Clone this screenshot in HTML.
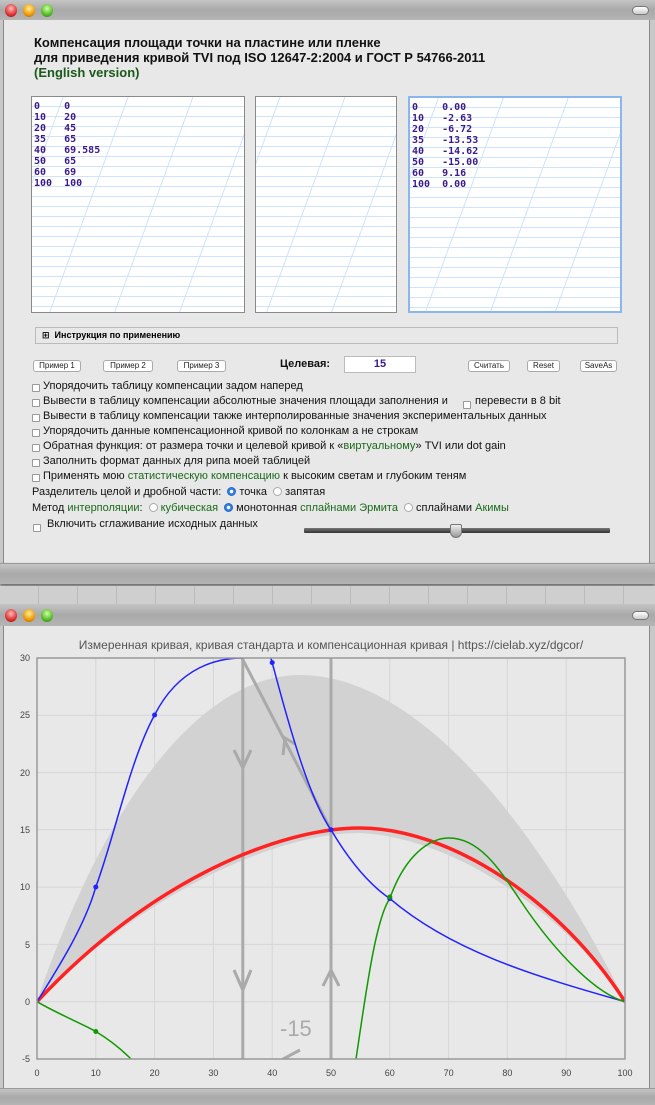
<!DOCTYPE html>
<html><head><meta charset="utf-8"><style>
*{margin:0;padding:0;box-sizing:border-box}
body{width:655px;height:1105px;overflow:hidden;background:#c8c8c8;font-family:"Liberation Sans","DejaVu Sans",sans-serif;position:relative}
.bar{position:absolute;left:0;width:655px;background:linear-gradient(#c4c4c4,#a9a9a9 50%,#b4b4b4);}
.tl{position:absolute;width:12px;height:13px;border-radius:50%;top:4px}
.r{background:radial-gradient(circle at 50% 35%,#fbb,#d33 60%,#900)}
.o{background:radial-gradient(circle at 50% 35%,#fe9,#e90 60%,#a50)}
.g{background:radial-gradient(circle at 50% 35%,#cfa,#5b2 60%,#272)}
.pill{position:absolute;right:6px;top:6px;width:17px;height:9px;border-radius:5px;border:1px solid #777;background:linear-gradient(#fff,#ccc)}
.content{position:absolute;left:3px;width:647px;background:#e8e8e8;border-left:1px solid #888;border-right:1px solid #888}
.abs{position:absolute}
.ta{position:absolute;top:96px;height:217px;border:1px solid #8a8a8a;background-color:#fff;
background-image:repeating-linear-gradient(180deg,transparent 0 9px,#cfe3fb 9px 10px),repeating-linear-gradient(-70deg,transparent 0 60px,#cfe3fb 60px 61px);
font:bold 10px "DejaVu Sans Mono","Liberation Mono",monospace;color:#3a1a8a;line-height:11px;padding:4px 2px;white-space:pre}
.btn{position:absolute;top:360px;height:12px;border:1px solid #aaa;border-radius:3px;background:#fff;font-size:8px;line-height:10px;text-align:center;color:#222}
.cb{position:absolute;left:32px;width:8px;height:8px;border:1px solid #999;background:#fff;border-radius:1px}
.t{position:absolute;font-size:11px;color:#111;white-space:nowrap}
.gr{color:#1a6a1a}
.rad{display:inline-block;width:9px;height:9px;border-radius:50%;border:1px solid #aaa;background:#fff;vertical-align:-1px;margin:0 3px}
.rad.on{background:radial-gradient(circle,#fff 0 1.5px,#2d7ee8 2px);border-color:#2a6ac8}
</style></head><body>
<div class="bar" style="top:0;height:20px"><div class="tl r" style="left:5px"></div><div class="tl o" style="left:23px"></div><div class="tl g" style="left:41px"></div><div class="pill"></div></div>
<div class="content" style="top:20px;height:544px"></div>
<div class="bar" style="top:563px;height:21px;border-top:1px solid #999;box-shadow:0 2px 3px #666"></div>
<div class="abs" style="top:586px;left:0;width:655px;height:18px;background:#cfcfcf;background-image:repeating-linear-gradient(90deg,transparent 0 38px,#bbb 38px 39px)"></div>
<div class="bar" style="top:604px;height:22px"><div class="tl r" style="left:5px;top:5px"></div><div class="tl o" style="left:23px;top:5px"></div><div class="tl g" style="left:41px;top:5px"></div><div class="pill" style="top:7px"></div></div>
<div class="content" style="top:626px;height:463px"></div>
<div class="bar" style="top:1088px;height:17px;border-top:1px solid #999"></div>

<div class="abs" style="left:34px;top:35px;font-weight:bold;font-size:13px;line-height:15px;color:#111">Компенсация площади точки на пластине или пленке<br>для приведения кривой TVI под ISO 12647-2:2004 и ГОСТ Р 54766-2011<br><span style="color:#1a5a1a">(English version)</span></div>

<div class="ta" style="left:31px;width:214px">0    0
10   20
20   45
35   65
40   69.585
50   65
60   69
100  100</div>
<div class="ta" style="left:255px;width:142px"></div>
<div class="ta" style="left:408px;width:214px;border:2px solid #8ab6ee">0    0.00
10   -2.63
20   -6.72
35   -13.53
40   -14.62
50   -15.00
60   9.16
100  0.00</div>

<div class="abs" style="left:35px;top:327px;width:583px;height:17px;border:1px solid #bbb;font-size:9px;font-weight:bold;line-height:15px;padding-left:6px">⊞ &nbsp;Инструкция по применению</div>

<div class="btn" style="left:33px;width:48px">Пример 1</div>
<div class="btn" style="left:103px;width:50px">Пример 2</div>
<div class="btn" style="left:177px;width:49px">Пример 3</div>
<div class="t" style="left:280px;top:358px;font-weight:bold">Целевая:</div>
<div class="abs" style="left:344px;top:356px;width:72px;height:17px;background:#fff;border:1px solid #bbb;text-align:center;font-weight:bold;font-size:11px;line-height:15px;color:#3a1a8a">15</div>
<div class="btn" style="left:468px;width:42px">Считать</div>
<div class="btn" style="left:527px;width:33px">Reset</div>
<div class="btn" style="left:580px;width:37px">SaveAs</div>

<div class="cb" style="top:384px"></div><div class="t" style="left:43px;top:380px">Упорядочить таблицу компенсации задом наперед</div>
<div class="cb" style="top:399px"></div><div class="t" style="left:43px;top:395px">Вывести в таблицу компенсации абсолютные значения площади заполнения и</div>
<div class="cb" style="top:401px;left:463px"></div><div class="t" style="left:475px;top:395px">перевести в 8 bit</div>
<div class="cb" style="top:414px"></div><div class="t" style="left:43px;top:410px">Вывести в таблицу компенсации также интерполированные значения экспериментальных данных</div>
<div class="cb" style="top:429px"></div><div class="t" style="left:43px;top:425px">Упорядочить данные компенсационной кривой по колонкам а не строкам</div>
<div class="cb" style="top:444px"></div><div class="t" style="left:43px;top:440px">Обратная функция: от размера точки и целевой кривой к «<span class="gr">виртуальному</span>» TVI или dot gain</div>
<div class="cb" style="top:459px"></div><div class="t" style="left:43px;top:455px">Заполнить формат данных для рипа моей таблицей</div>
<div class="cb" style="top:474px"></div><div class="t" style="left:43px;top:470px">Применять мою <span class="gr">статистическую компенсацию</span> к высоким светам и глубоким теням</div>
<div class="t" style="left:32px;top:486px">Разделитель целой и дробной части: <span class="rad on"></span>точка <span class="rad"></span>запятая</div>
<div class="t" style="left:32px;top:502px">Метод <span class="gr">интерполяции</span>: <span class="rad"></span><span class="gr">кубическая</span> <span class="rad on"></span>монотонная <span class="gr">сплайнами Эрмита</span> <span class="rad"></span>сплайнами <span class="gr">Акимы</span></div>
<div class="cb" style="top:524px;left:33px"></div><div class="t" style="left:47px;top:518px">Включить сглаживание исходных данных</div>
<div class="abs" style="left:304px;top:528px;width:306px;height:5px;background:linear-gradient(#777,#333);border-radius:1px"></div>
<div class="abs" style="left:450px;top:524px;width:12px;height:14px;background:linear-gradient(#eee,#999);border:1px solid #777;border-radius:2px 2px 6px 6px"></div>

<svg class="abs" style="left:0;top:626px" width="655" height="462" viewBox="0 626 655 462" font-family="Liberation Sans, DejaVu Sans, sans-serif">
<defs><clipPath id="c"><rect x="37" y="658" width="588" height="401"/></clipPath></defs>
<text x="331" y="649" text-anchor="middle" font-size="12" fill="#555">Измеренная кривая, кривая стандарта и компенсационная кривая | https://cielab.xyz/dgcor/</text>
<g stroke="#d6d6d6" stroke-width="1">
<line x1="37" y1="715.3" x2="625" y2="715.3"/><line x1="37" y1="772.6" x2="625" y2="772.6"/><line x1="37" y1="829.8" x2="625" y2="829.8"/><line x1="37" y1="887.1" x2="625" y2="887.1"/><line x1="37" y1="944.4" x2="625" y2="944.4"/><line x1="37" y1="1001.7" x2="625" y2="1001.7"/>
<line x1="95.8" y1="658" x2="95.8" y2="1059"/><line x1="154.6" y1="658" x2="154.6" y2="1059"/><line x1="213.4" y1="658" x2="213.4" y2="1059"/><line x1="272.2" y1="658" x2="272.2" y2="1059"/><line x1="331" y1="658" x2="331" y2="1059"/><line x1="389.8" y1="658" x2="389.8" y2="1059"/><line x1="448.6" y1="658" x2="448.6" y2="1059"/><line x1="507.4" y1="658" x2="507.4" y2="1059"/><line x1="566.2" y1="658" x2="566.2" y2="1059"/>
</g>
<g clip-path="url(#c)">
<path d="M37,1001 C120,760 220,675 300,675 C420,675 540,830 625,1001 C560,908 450,837 360,833 C280,833 150,888 37,1001Z" fill="#d2d2d2"/>
<g stroke="#aaa" stroke-width="3" fill="none">
<line x1="242.8" y1="658" x2="242.8" y2="1059"/><line x1="331" y1="658" x2="331" y2="1059"/><line x1="242" y1="658" x2="331" y2="830"/>
<path d="M234,750 L242.8,768 L251,750"/><path d="M234,970 L242.8,990 L251,970"/><path d="M323,986 L331,970 L339,986"/><path d="M283,755 L285,738 L295,744"/><path d="M300,1050 L285,1058 L300,1066"/>
</g>
<text x="280" y="1036" font-size="22" fill="#aaa">-15</text>
<path d="M37,1001.7 C150,880 280,828 360,828 C450,828 560,900 625,1001.7" stroke="#f22" stroke-width="3.5" fill="none"/>
<path d="M37,1001.7 C60,965 85,925 95.8,887 C115,835 130,760 154.6,715 C180,665 220,658 242.8,658 L250,656 M269,652 L272.2,662.6 C290,730 310,800 331,829.8 C350,862 370,885 389.8,898.6 C450,950 530,975 625,1001.7" stroke="#22f" stroke-width="1.5" fill="none"/>
<path d="M37,1001.7 C60,1015 85,1025 95.8,1031.5 C110,1040 122,1050 131,1059 M356,1059 C365,1000 375,920 389.8,898.6 C405,855 430,838 448.6,838 C480,838 500,870 520,900 C560,960 600,995 625,1001.7" stroke="#190" stroke-width="1.5" fill="none"/>
<g fill="#22f"><circle cx="95.8" cy="887" r="2.5"/><circle cx="154.6" cy="715" r="2.5"/><circle cx="272.2" cy="662.6" r="2.5"/><circle cx="331" cy="829.8" r="2.5"/><circle cx="389.8" cy="898.6" r="2.5"/></g>
<g fill="#190"><circle cx="95.8" cy="1031.5" r="2.5"/><circle cx="389.8" cy="897" r="2.5"/></g>
</g>
<rect x="37" y="658" width="588" height="401" fill="none" stroke="#999" stroke-width="1.5"/>
<g font-size="9" fill="#444" text-anchor="end">
<text x="30" y="661">30</text><text x="30" y="718">25</text><text x="30" y="776">20</text><text x="30" y="833">15</text><text x="30" y="890">10</text><text x="30" y="948">5</text><text x="30" y="1005">0</text><text x="30" y="1062">-5</text></g>
<g font-size="9" fill="#444" text-anchor="middle">
<text x="37" y="1076">0</text><text x="95.8" y="1076">10</text><text x="154.6" y="1076">20</text><text x="213.4" y="1076">30</text><text x="272.2" y="1076">40</text><text x="331" y="1076">50</text><text x="389.8" y="1076">60</text><text x="448.6" y="1076">70</text><text x="507.4" y="1076">80</text><text x="566.2" y="1076">90</text><text x="625" y="1076">100</text></g>
</svg>
</body></html>
